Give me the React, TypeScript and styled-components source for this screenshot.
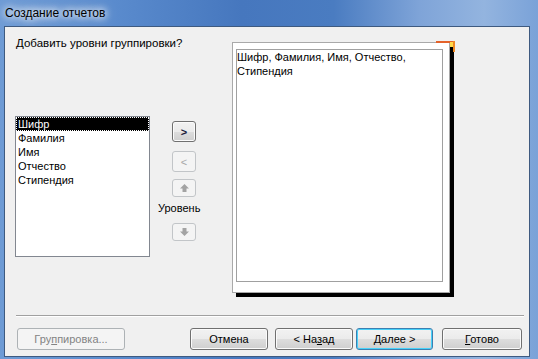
import styled, { createGlobalStyle, css } from "styled-components";

const GlobalStyle = createGlobalStyle`
  html, body {
    margin: 0;
    padding: 0;
    width: 538px;
    height: 359px;
    overflow: hidden;
  }
  body {
    font-family: "Liberation Sans", Arial, sans-serif;
  }
`;

const fields = ["Шифр", "Фамилия", "Имя", "Отчество", "Стипендия"];

const App: React.FC = () => {
  return (
    <>
      <GlobalStyle />
      <Window>
        <TitleBar>Создание отчетов</TitleBar>
        <Client>
          <Body>
            <LeftCol>
              <Prompt>Добавить уровни группировки?</Prompt>
              <ListBox>
                {fields.map((f, i) => (
                  <ListItem key={f} $selected={i === 0}>
                    {f}
                  </ListItem>
                ))}
              </ListBox>
            </LeftCol>

            <MidCol>
              <SmallButton $h={21}>&gt;</SmallButton>
              <SmallButton $h={21} $top={9} disabled>
                &lt;
              </SmallButton>
              <SmallButton $h={18} $top={7} disabled>
                <ArrowIcon dir="up" />
              </SmallButton>
              <LevelLabel>Уровень</LevelLabel>
              <SmallButton $h={18} $top={8} disabled>
                <ArrowIcon dir="down" />
              </SmallButton>
            </MidCol>

            <RightCol>
              <Page>
                <Corner width="20" height="12" viewBox="0 0 20 12">
                  <rect x="0" y="0" width="19" height="2" fill="#e4622a" />
                  <rect x="17" y="0" width="2" height="11" fill="#f08a24" />
                  <rect x="14" y="1" width="3" height="5" fill="#ffd94a" />
                </Corner>
                <PageInner>Шифр, Фамилия, Имя, Отчество, Стипендия</PageInner>
              </Page>
            </RightCol>
          </Body>

          <Separator />

          <ButtonRow>
            <DlgButton $w={108} disabled>
              Гру<u>п</u>пировка...
            </DlgButton>
            <DlgButton $w={78} $ml={65}>
              Отмена
            </DlgButton>
            <DlgButton $w={78} $ml={7}>
              &lt; На<u>з</u>ад
            </DlgButton>
            <DlgButton $w={77} $ml={3} $focused>
              <u>Д</u>алее &gt;
            </DlgButton>
            <DlgButton $w={80} $ml={9}>
              <u>Г</u>отово
            </DlgButton>
          </ButtonRow>
        </Client>
      </Window>
    </>
  );
};

export default App;

const ArrowIcon: React.FC<{ dir: "up" | "down" }> = ({ dir }) => (
  <svg width="9" height="8" viewBox="0 0 9 8">
    {dir === "up" ? (
      <path d="M4.5 0 L9 4.5 L6.5 4.5 L6.5 8 L2.5 8 L2.5 4.5 L0 4.5 Z" fill="#a3a3a3" />
    ) : (
      <path d="M4.5 8 L9 3.5 L6.5 3.5 L6.5 0 L2.5 0 L2.5 3.5 L0 3.5 Z" fill="#a3a3a3" />
    )}
  </svg>
);

const Window = styled.div`
  width: 538px;
  height: 359px;
  box-sizing: border-box;
  padding: 0 8px 2px 4px;
  display: flex;
  flex-direction: column;
  background: linear-gradient(
    90deg,
    #6e9bd5 0%,
    #5b8cce 20%,
    #4677be 45%,
    #4a7cc1 62%,
    #7fa4d8 78%,
    #93b4df 90%,
    #7aa2d8 100%
  );
`;

const TitleBar = styled.div`
  height: 26px;
  display: flex;
  align-items: center;
  padding-left: 1px;
  font-family: "Liberation Sans", Arial, sans-serif;
  font-size: 12px;
  color: #000;
  text-shadow: 0 0 6px #fff, 0 0 10px #fff, 0 0 14px rgba(255, 255, 255, 0.8);
`;

const Client = styled.div`
  flex: 1;
  display: flex;
  flex-direction: column;
  border: 1px solid #3e5a80;
  background: #f0f0f0;
  font-size: 11px;
  color: #000;
`;

const Body = styled.div`
  height: 288px;
  display: flex;
  padding-left: 10px;
`;

const LeftCol = styled.div`
  width: 135px;
  padding-top: 9px;
`;

const Prompt = styled.div`
  font-size: 11.5px;
  line-height: 14px;
  white-space: nowrap;
  padding-left: 1px;
`;

const ListBox = styled.div`
  margin-top: 66px;
  width: 135px;
  height: 141px;
  box-sizing: border-box;
  border: 1px solid #828790;
  background: #fff;
`;

const ListItem = styled.div<{ $selected?: boolean }>`
  height: 14px;
  line-height: 14px;
  padding-left: 2px;
  ${(p) =>
    p.$selected &&
    css`
      background: #000;
      color: #fff;
      outline: 1px dotted #fff;
      outline-offset: -1px;
    `}
`;

const MidCol = styled.div`
  width: 50px;
  margin-left: 7px;
  padding-top: 94px;
  display: flex;
  flex-direction: column;
  align-items: flex-start;
`;

const SmallButton = styled.button<{ $h: number; $top?: number }>`
  width: 24px;
  height: ${(p) => p.$h}px;
  margin: ${(p) => p.$top ?? 0}px 0 0 15px;
  padding: 0;
  box-sizing: border-box;
  display: flex;
  align-items: center;
  justify-content: center;
  font-family: "Liberation Sans", Arial, sans-serif;
  font-size: 11px;
  font-weight: bold;
  color: #1a1a3a;
  border: 1px solid #707070;
  border-radius: 3px;
  box-shadow: inset 0 0 0 1px #fbfbfb;
  background: linear-gradient(#f2f2f2 0%, #ebebeb 50%, #dddddd 51%, #cfcfcf 100%);

  &:disabled {
    border-color: #c2c5c8;
    background: #f4f4f4;
    box-shadow: none;
    color: #a8a8a8;
    font-weight: normal;
  }
`;

const LevelLabel = styled.div`
  margin-top: 4px;
  padding-left: 1px;
  line-height: 14px;
`;

const RightCol = styled.div`
  margin-left: 25px;
  padding-top: 15px;
`;

const Page = styled.div`
  position: relative;
  width: 218px;
  height: 251px;
  box-sizing: border-box;
  padding: 6px 6px 10px 3px;
  border: 1px solid #a9a9a9;
  background: #fff;
  box-shadow: 4px 4px 0 #000;
`;

const Corner = styled.svg`
  position: absolute;
  left: 203px;
  top: -2px;
`;

const PageInner = styled.div`
  height: 100%;
  box-sizing: border-box;
  border: 1px solid #a0a0a0;
  padding-left: 0;
  line-height: 14px;
  color: #000;
`;

const Separator = styled.div`
  margin: 0 5px 0 11px;
  border-top: 1px solid #a0a0a0;
  border-bottom: 1px solid #fff;
`;

const ButtonRow = styled.div`
  display: flex;
  margin-top: 11px;
  padding-left: 12px;
`;

const DlgButton = styled.button<{ $w: number; $ml?: number; $focused?: boolean }>`
  width: ${(p) => p.$w}px;
  height: 22px;
  margin-left: ${(p) => p.$ml ?? 0}px;
  padding: 0;
  box-sizing: border-box;
  font-family: "Liberation Sans", Arial, sans-serif;
  font-size: 11px;
  color: #000;
  border: 1px solid #707070;
  border-radius: 3px;
  box-shadow: inset 0 0 0 1px #fbfbfb;
  background: linear-gradient(#f2f2f2 0%, #ebebeb 50%, #dddddd 51%, #cfcfcf 100%);

  u {
    text-decoration: underline;
    text-underline-offset: 1px;
  }

  ${(p) =>
    p.$focused &&
    css`
      border-color: #3c7fb1;
      box-shadow: inset 0 0 0 1px #48d1f9;
    `}

  &:disabled {
    border-color: #adb2b5;
    background: #f4f4f4;
    box-shadow: none;
    color: #838383;
  }
`;
